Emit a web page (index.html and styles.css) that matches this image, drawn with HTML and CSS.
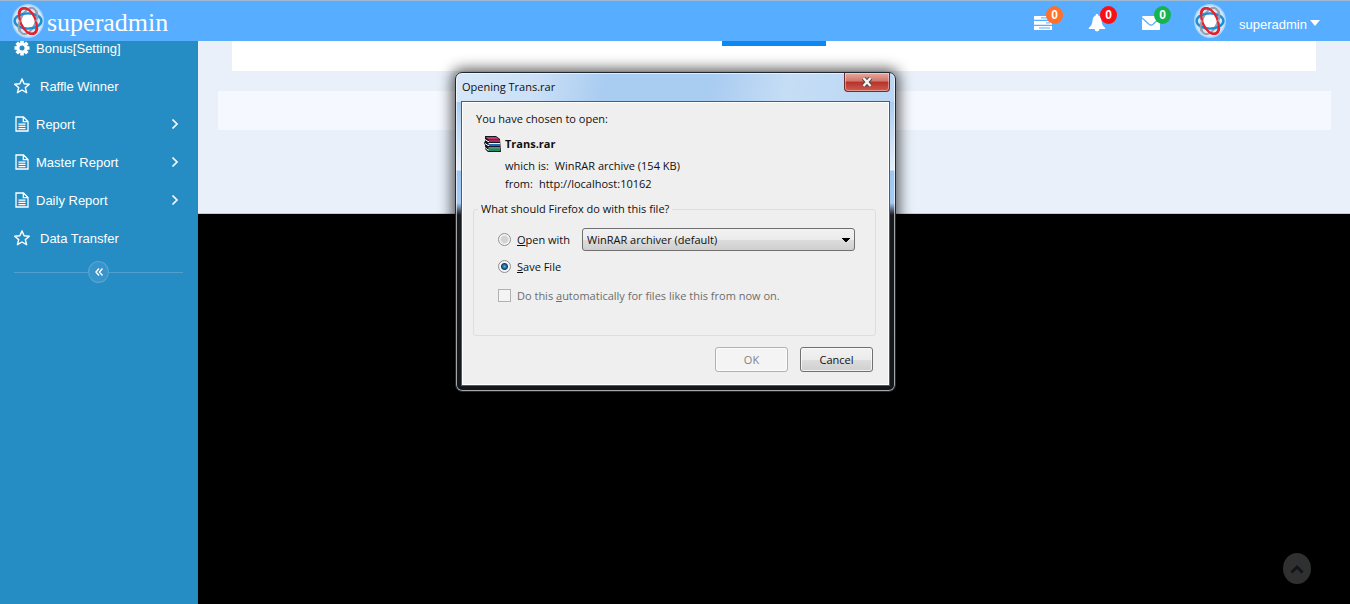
FILE: index.html
```html
<!DOCTYPE html>
<html lang="en">
<head>
<meta charset="utf-8">
<title>superadmin</title>
<link rel="stylesheet" href="styles.css">
</head>
<body>
<svg class="defs" aria-hidden="true">
  <symbol id="logo" viewBox="0 0 32 34">
    <ellipse cx="16" cy="17" rx="16" ry="17" fill="#a9d4fb"/>
    <ellipse cx="16" cy="17" rx="14.500" ry="15.500" fill="#d3e9fd"/>
    <circle cx="16" cy="17" r="7" fill="#fff"/>
    <g fill="none">
      <ellipse cx="16" cy="17" rx="7.500" ry="13.800" stroke="#9a9fa8" stroke-width="2" transform="rotate(22 16 17)"/>
      <ellipse cx="16" cy="17" rx="13.400" ry="7.600" stroke="#1d8fd0" stroke-width="2.400"/>
      <ellipse cx="16" cy="17" rx="7.500" ry="13.800" stroke="#e3202b" stroke-width="2.200" transform="rotate(-24 16 17)"/>
      <path d="M7 10C7 5 11 3 15 5M25 24c0 5-4 7-8 5" stroke="#e3202b" stroke-width="2.500"/>
      <path d="M24.500 6.500c1.500 4 1 8-.500 11M7.500 27.500c-1.500-4-1-8 .5-11" stroke="#9a9fa8" stroke-width="1.800"/>
    </g>
  </symbol>
  <symbol id="star" viewBox="0 0 16 16"><path d="M8 .9l2.100 4.900 5.200.4-4 3.400 1.300 5.100L8 12l-4.600 2.700 1.300-5.100-4-3.400 5.200-.4z" fill="none" stroke="#fff" stroke-width="1.400" stroke-linejoin="round"/></symbol>
  <symbol id="doc" viewBox="0 0 16 16"><path d="M2 1h7.500L14 5.500V15H2zM9.300 1v4.700H14M4.500 8.200h7M4.500 10.400h7M4.500 12.600h7" fill="none" stroke="#fff" stroke-width="1.300"/></symbol>
  <symbol id="right" viewBox="0 0 8 12"><path d="M1.500 1.500L6 6l-4.500 4.500" fill="none" stroke="#fff" stroke-width="1.700"/></symbol>
</svg>

<header class="topbar">
  <a class="brand" href="#"><svg class="logo"><use href="#logo"/></svg><span>superadmin</span></a>
  <nav class="tools">
    <button class="tool" aria-label="Tasks">
      <svg viewBox="0 0 18 14"><path d="M0 0h12l2 3.700H0zM0 5h17q1 0 1 1v2.700H0zM0 10h18v4H0z" fill="#fff"/><path d="M7 1.900h6M12 6.900h4M5 12h11" stroke="#57adff"/></svg>
      <span class="badge orange">0</span>
    </button>
    <button class="tool" aria-label="Notifications">
      <svg viewBox="0 0 18 18"><path d="M9 0c1 0 1.400.6 1.400 1.500C13 2.500 13.300 5 13.700 8c.4 3 1.800 4.500 3.500 6v1H.8v-1c1.700-1.500 3.100-3 3.500-6C4.700 5 5 2.500 7.600 1.500 7.600.6 8 0 9 0zM6.500 15h5a2.500 2.500 0 0 1-5 0z" fill="#fff"/></svg>
      <span class="badge red">0</span>
    </button>
    <button class="tool" aria-label="Messages">
      <svg viewBox="0 0 18 14"><path d="M0 1.500C0 .6.600 0 1.500 0h15c.9 0 1.500.6 1.500 1.500V13c0 .6-.4 1-1 1H1c-.6 0-1-.4-1-1z" fill="#fff"/><path d="M0 2l7 6.300q2 1.700 4 0L18 2" fill="none" stroke="#57adff" stroke-width="1.300"/></svg>
      <span class="badge green">0</span>
    </button>
  </nav>
  <button class="user"><svg class="logo"><use href="#logo"/></svg><span>superadmin</span><svg class="caret" viewBox="0 0 10 6"><path d="M0 0h10L5 6z" fill="#fff"/></svg></button>
</header>

<div class="layout">
  <aside class="sidebar">
    <nav class="menu">
      <a class="item" href="#"><svg class="icon" viewBox="0 0 16 16"><path d="M8 .5v15M.5 8h15M2.700 2.700l10.600 10.600M13.300 2.700L2.700 13.300" stroke="#fff" stroke-width="3.600"/><circle cx="8" cy="8" r="5.800" fill="#fff"/><circle cx="8" cy="8" r="2.500" fill="#258dc3"/></svg><span>Bonus[Setting]</span></a>
      <a class="item wide" href="#"><svg class="icon"><use href="#star"/></svg><span>Raffle Winner</span></a>
      <a class="item" href="#"><svg class="icon"><use href="#doc"/></svg><span>Report</span><svg class="chev"><use href="#right"/></svg></a>
      <a class="item" href="#"><svg class="icon"><use href="#doc"/></svg><span>Master Report</span><svg class="chev"><use href="#right"/></svg></a>
      <a class="item" href="#"><svg class="icon"><use href="#doc"/></svg><span>Daily Report</span><svg class="chev"><use href="#right"/></svg></a>
      <a class="item wide" href="#"><svg class="icon"><use href="#star"/></svg><span>Data Transfer</span></a>
    </nav>
    <div class="fold"><button class="fold-button" aria-label="Collapse menu"><svg viewBox="0 0 8 8"><path d="M4 .5L1 4l3 3.500M7.500 .5L4.500 4l3 3.500" fill="none" stroke="#fff" stroke-width="1.400"/></svg></button></div>
  </aside>
  <main class="main">
    <div class="page">
      <section class="panel"><button class="submit" aria-label="Submit"></button></section>
      <footer class="strip"></footer>
    </div>
    <button class="to-top" aria-label="Back to top"><svg viewBox="0 0 14 10"><path d="M1.500 8.500L7 3l5.500 5.500" fill="none" stroke="#10161b" stroke-width="3"/></svg></button>
  </main>
</div>

<div class="dialog" role="dialog" aria-labelledby="dialog-title">
  <div class="titlebar">
    <span id="dialog-title">Opening Trans.rar</span>
    <button class="close" aria-label="Close"><svg viewBox="0 0 12 10"><path d="M2.500 1l7 8M9.500 1l-7 8" stroke="#5d4548" stroke-width="4.400"/><path d="M2.500 1l7 8M9.500 1l-7 8" stroke="#f4f4f4" stroke-width="2.400"/></svg></button>
  </div>
  <form class="content">
    <p class="intro">You have chosen to open:</p>
    <div class="file">
      <svg class="rar" viewBox="0 0 17 17">
        <path d="M1 0h11l4 3 1 13H4l-3-3V9l-1-2 1-2z" fill="#19151c"/>
        <path d="M1.500 1H12l3.500 2.500h-11z" fill="#c43a6f"/><path d="M5 4h11v2H5z" fill="#a02a62"/>
        <path d="M4.500 7H16v1H4.500z" fill="#e8f3ff"/><path d="M4.500 8H16v2H4.500z" fill="#2268b8"/>
        <path d="M4.500 11.500H16v1H4.500z" fill="#d8f5ea"/><path d="M4.500 12.500H16V15H4.500z" fill="#15935f"/>
        <path d="M1 3.500l3 2h1M1 7.500l3 2h1M1 11.500l3 2.500h1" fill="none" stroke="#fff"/>
      </svg>
      <strong>Trans.rar</strong>
    </div>
    <dl class="facts">
      <div><dt>which is:</dt><dd>WinRAR archive (154 KB)</dd></div>
      <div><dt>from:</dt><dd>http://localhost:10162</dd></div>
    </dl>
    <fieldset class="choices">
      <legend>What should Firefox do with this file?</legend>
      <div class="choice">
        <input type="radio" name="action" id="open"><label for="open"><u>O</u>pen with</label>
        <select class="program" aria-label="Program"><option>WinRAR archiver (default)</option></select>
      </div>
      <div class="choice"><input type="radio" name="action" id="save" checked><label for="save"><u>S</u>ave File</label></div>
      <div class="choice muted"><input type="checkbox" id="auto" disabled><label for="auto">Do this <u>a</u>utomatically for files like this from now on.</label></div>
    </fieldset>
    <div class="actions"><button type="button" class="btn" disabled>OK</button><button type="button" class="btn">Cancel</button></div>
  </form>
</div>
</body>
</html>
```

FILE: styles.css
```css
* { box-sizing: border-box; }
body {
  margin: 0;
  min-height: 100vh;
  display: flex;
  flex-direction: column;
  background: #000;
  color: #fff;
  font: 13px/20px "Liberation Sans", Arial, sans-serif;
}
button { border: 0; padding: 0; background: none; color: inherit; font: inherit; }
a { color: inherit; text-decoration: none; }
svg { display: block; flex: none; }
.defs { position: absolute; width: 0; height: 0; }

.topbar {
  position: relative;
  z-index: 2;
  display: flex;
  align-items: center;
  height: 41px;
  padding: 0 30px 0 12px;
  border-top: 1px solid #a0b9d3;
  background: #57adff;
}
.brand { display: flex; align-items: center; gap: 3px; margin-right: auto; }
.brand span { font: 26px/32px "Liberation Serif", "Times New Roman", serif; padding-top: 4px; }
.logo { width: 32px; height: 34px; }
.tools { display: flex; gap: 36px; margin-right: 34px; padding-top: 4px; }
.tool { position: relative; width: 18px; height: 18px; display: flex; align-items: center; }
.tool svg { width: 18px; }
.badge {
  position: absolute;
  left: 12px;
  top: -8px;
  width: 17px;
  height: 18px;
  border-radius: 50%;
  font: bold 12px/18px "Liberation Sans", Arial, sans-serif;
  text-align: center;
}
.orange { background: #ff702a; }
.red { background: #fa0f14; }
.green { background: #18b351; }
.user { display: flex; align-items: center; gap: 13px; }
.user span { padding-top: 7px; }
.caret { width: 10px; height: 6px; margin: 4px 0 0 -10px; }

.layout { flex: 1; display: flex; }
.sidebar { width: 198px; flex: none; margin-top: -12px; background: #258dc3; border-right: 1px solid #3b83ad; }
.item { display: flex; align-items: center; gap: 6px; height: 38px; padding: 0 18px 0 14px; }
.item span { padding-top: 1px; }
.wide { gap: 10px; }
.icon { width: 16px; height: 16px; }
.chev { width: 8px; height: 12px; margin-left: auto; }
.fold { display: flex; align-items: center; margin: 4px 14px 0; }
.fold::before, .fold::after { content: ""; flex: 1; height: 1px; background: #519fd0; }
.fold-button {
  width: 21px;
  height: 22px;
  border: 1px solid #57a7d5;
  border-radius: 50%;
  background: #3994cb;
  display: grid;
  place-items: center;
}
.fold-button svg { width: 8px; height: 8px; }

.main { flex: 1; display: flex; flex-direction: column; justify-content: space-between; }
.page { height: 173px; padding: 0 19px 0 20px; background: #e9f0f9; border-bottom: 1px solid #c5cad0; }
.panel { height: 30px; margin: 0 15px 20px 14px; background: #fff; }
.submit { display: block; width: 104px; height: 5px; margin: 0 auto; background: #0d87f2; }
.strip { height: 39px; background: #f5f8fe; }
.to-top {
  align-self: flex-end;
  width: 28px;
  height: 31px;
  margin: 0 39px 20px;
  border-radius: 50%;
  background: #303030;
  display: grid;
  place-items: center;
}
.to-top svg { width: 14px; height: 10px; }

.dialog {
  position: absolute;
  z-index: 3;
  left: 455px;
  top: 72px;
  width: 441px;
  padding: 0 5px 5px;
  border: 1px solid #20272e;
  border-radius: 7px;
  background:
    linear-gradient(100deg, #fff8 0, #fff6 18%, #fff0 34%, #fff0 58%, #fff5 75%, #fff3) top / 100% 29px no-repeat,
    linear-gradient(#a9ccf1 0, #a9ccf1 28px, #c5dcf5 60px, #e6effa 97px, #9ec6f3 98px, #a5caf5 130px, #16191e 142px, #14181d);
  box-shadow: inset 0 0 0 1px #ffffff9c, 0 0 14px 3px #000000a8;
  color: #101010;
  font: 11px/18px "Open Sans", "Noto Sans", sans-serif;
}
.titlebar { display: flex; height: 28px; padding-left: 1px; line-height: 28px; }
.close {
  width: 46px;
  height: 19px;
  margin-left: auto;
  border: 1px solid #702b2b;
  border-top: 0;
  border-radius: 0 0 4px 4px;
  background: linear-gradient(#e6aaa0 0, #d2766a 45%, #b5322b 50%, #cf5b4c);
  box-shadow: inset 0 0 0 1px #ffffff66;
  display: grid;
  place-items: center;
}
.close svg { width: 12px; height: 10px; }
.content {
  padding: 8px 13px 13px 11px;
  border: 1px solid #4b5c6f;
  box-shadow: inset 0 0 0 1px #fff;
  background: #efefef;
}
.intro { margin: 0 3px 7px; }
.file { display: flex; align-items: center; gap: 4px; height: 18px; margin-left: 11px; }
.rar { width: 17px; height: 17px; }
.facts { margin: 4px 0 7px 32px; }
.facts div { display: flex; gap: 6px; }
.facts dd { margin: 0; }
.choices {
  height: 136px;
  margin: 0;
  padding: 8px 20px 0 24px;
  border: 1px solid #d5dfe8;
  border-radius: 3px;
}
.choices legend { margin-left: -20px; padding: 0 3px; }
.choice { display: flex; align-items: center; height: 27px; }
.choice input {
  appearance: none;
  width: 13px;
  height: 13px;
  margin: 0 6px 0 0;
  border: 1px solid #8e8f8f;
  background: #f4f4f4;
}
.choice input[type="radio"] { border-radius: 50%; background: radial-gradient(circle, #cfd3d6 0 3px, #f7f7f7 5px); }
.choice input[type="radio"]:checked { background: radial-gradient(circle at 50% 50%, #4bb9ee 0, #123a6b 3px, #f4f4f4 4px); }
.choice input[type="checkbox"] { border-color: #b1b1b1; }
.muted { height: 31px; color: #6d6d6d; }
.program {
  appearance: none;
  flex: 1;
  height: 23px;
  margin-left: 12px;
  padding: 0 4px;
  border: 1px solid #707070;
  border-radius: 3px;
  background:
    conic-gradient(from -45deg at 50% 100%, #000 90deg, #0000 0) right 4px center / 8px 4px no-repeat,
    linear-gradient(#f2f2f2 0, #ebebeb 50%, #dddddd 51%, #cfcfcf);
  color: inherit;
  font: inherit;
}
.actions { display: flex; justify-content: flex-end; gap: 12px; padding: 11px 3px 0 0; }
.btn {
  width: 73px;
  height: 25px;
  border: 1px solid #707070;
  border-radius: 3px;
  background: linear-gradient(#f2f2f2 0, #ebebeb 50%, #dddddd 51%, #cfcfcf);
  box-shadow: inset 0 0 0 1px #ffffffb0;
}
.btn:disabled { border-color: #adb2b5; background: #f4f4f4; color: #838383; }
```
